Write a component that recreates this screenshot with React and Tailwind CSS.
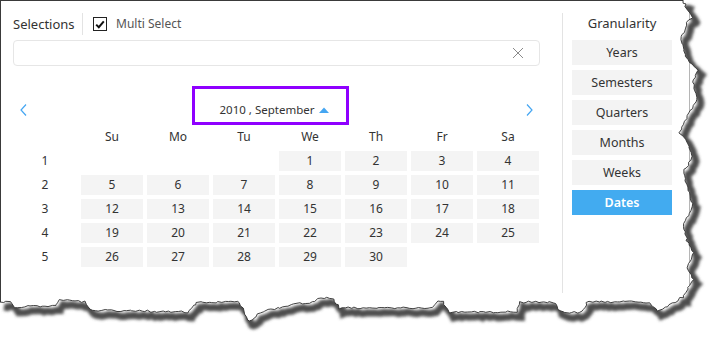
import React from "react";

const ctrl = [[683,0],[687,10],[693,17],[687,23],[680,40],[687,60],[699,70],[693,80],[697,100],[690,110],[680,133],[687,143],[693,157],[683,173],[687,187],[693,207],[683,227],[687,240],[693,253],[687,267],[693,280],[683,297],[670,305],[657,312],[650,302],[587,302],[583,312],[560,312],[553,302],[520,302],[517,312],[450,312],[443,302],[437,302],[433,308],[340,308],[333,298],[320,298],[310,303],[300,303],[260,312],[253,320],[247,320],[240,302],[197,302],[187,312],[90,310],[85,302],[60,300],[55,306],[15,307],[10,302],[0,302]];

function makeEdge() {
  let s = 12345;
  const r = () => { s = (s * 16807) % 2147483647; return (s - 1) / 2147483646; };
  const pts = [];
  for (let i = 0; i < ctrl.length - 1; i++) {
    const [x1, y1] = ctrl[i];
    const [x2, y2] = ctrl[i + 1];
    const d = Math.hypot(x2 - x1, y2 - y1);
    const n = Math.max(1, Math.round(d / 3));
    for (let j = 0; j < n; j++) {
      const t = j / n;
      const jx = i === 0 && j === 0 ? 0 : (r() - 0.5) * 2.2;
      const jy = i === 0 && j === 0 ? 0 : (r() - 0.5) * 2.2;
      pts.push([x1 + (x2 - x1) * t + jx, y1 + (y2 - y1) * t + jy]);
    }
  }
  pts.push(ctrl[ctrl.length - 1]);
  return pts;
}
const EDGE = makeEdge();
const edgeStr = EDGE.map((p) => `${p[0].toFixed(1)},${p[1].toFixed(1)}`).join(" L");
const outside = `M725,0 L${edgeStr} L0,342 L725,342 Z`;
const edgeLine = `M${edgeStr}`;

const weeks = [
  [1, [null, null, null, 1, 2, 3, 4]],
  [2, [5, 6, 7, 8, 9, 10, 11]],
  [3, [12, 13, 14, 15, 16, 17, 18]],
  [4, [19, 20, 21, 22, 23, 24, 25]],
  [5, [26, 27, 28, 29, 30, null, null]],
];
const days = ["Su", "Mo", "Tu", "We", "Th", "Fr", "Sa"];
const grans = ["Years", "Semesters", "Quarters", "Months", "Weeks", "Dates"];

export default function App() {
  return (
    <div className="relative w-[725px] h-[342px] bg-white overflow-hidden font-['Noto_Sans',sans-serif] text-[#333]">
      <div className="w-[690px] h-[312px] border-t border-l border-r border-t-[#3a3a3a] border-l-[#3a3a3a] border-r-[#b5b5b5] flex">
        {/* left */}
        <div className="pl-[12px] pt-[12px] w-[539px] shrink-0 flex flex-col">
          <div className="h-[22px] flex items-center">
            <div className="w-[59px] text-[13px] leading-none">Selections</div>
            <div className="ml-[10px] w-px h-[22px] bg-[#e3e3e3]" />
            <div className="ml-[10px] w-[14px] h-[14px] border border-[#222] flex items-center justify-center">
              <svg width="10" height="9" viewBox="0 0 10 9">
                <path d="M1.2 4.6 L3.8 7.2 L8.8 1.4" fill="none" stroke="#111" strokeWidth="2" />
              </svg>
            </div>
            <div className="ml-[9px] text-[12px] text-[#555] leading-none">Multi Select</div>
          </div>
          <div className="mt-[5px] h-[26px] w-[527px] border border-[#e6e6e6] rounded-[4px] flex items-center justify-end pr-[15px]">
            <svg width="12" height="12" viewBox="0 0 12 12">
              <path d="M1 1 L11 11 M11 1 L1 11" stroke="#8a8a8a" strokeWidth="1" fill="none" />
            </svg>
          </div>
          <div className="mt-[34px] h-[20px] w-[527px] flex items-center">
            <div className="w-[14px] flex justify-end">
              <svg width="7" height="12" viewBox="0 0 7 12">
                <path d="M6 0.5 L1 6 L6 11.5" stroke="#45a6f2" strokeWidth="1.2" fill="none" />
              </svg>
            </div>
            <div className="flex-1 flex items-center justify-center pr-[4px]">
              <span className="text-[11.5px]">2010 , September</span>
              <svg className="ml-[5px]" width="10" height="6" viewBox="0 0 10 6">
                <path d="M0 6 L5 0.5 L10 6 Z" fill="#45a6f2" />
              </svg>
            </div>
            <div className="w-[14px] flex justify-start">
              <svg width="7" height="12" viewBox="0 0 7 12">
                <path d="M1 0.5 L6 6 L1 11.5" stroke="#45a6f2" strokeWidth="1.2" fill="none" />
              </svg>
            </div>
          </div>
          <div className="mt-[7px] grid grid-cols-[64px_repeat(7,62px)] auto-rows-[20px] gap-[4px] text-[12px]">
            <div />
            {days.map((d) => (
              <div key={d} className="flex items-center justify-center">{d}</div>
            ))}
            {weeks.map(([w, ds]) => (
              <React.Fragment key={w}>
                <div className="flex items-center justify-center">{w}</div>
                {ds.map((d, i) =>
                  d === null ? (
                    <div key={i} />
                  ) : (
                    <div key={i} className="bg-[#f4f4f4] flex items-center justify-center">{d}</div>
                  )
                )}
              </React.Fragment>
            ))}
          </div>
        </div>
        {/* divider */}
        <div className="ml-[22px] mt-[12px] w-px h-[280px] shrink-0 bg-[#e3e3e3]" />
        {/* right */}
        <div className="ml-[9px] pt-[11px] w-[100px] shrink-0 flex flex-col">
          <div className="h-[22px] flex items-center justify-center text-[13px] leading-none">Granularity</div>
          <div className="mt-[6px] flex flex-col gap-[5px]">
            {grans.map((g) =>
              g === "Dates" ? (
                <div key={g} className="h-[25px] pt-[2px] bg-[#42abf0] text-white font-semibold text-[12.5px] flex items-center justify-center">{g}</div>
              ) : (
                <div key={g} className="h-[25px] pt-[2px] bg-[#f3f3f3] text-[12.5px] flex items-center justify-center">{g}</div>
              )
            )}
          </div>
        </div>
      </div>

      {/* annotation box */}
      <div className="absolute left-[192px] top-[86px] w-[157px] h-[39px] border-[3px] border-[#8f00ff]" />

      {/* torn edge */}
      <svg className="absolute left-0 top-0" width="725" height="342" viewBox="0 0 725 342">
        <defs>
          <filter id="blur" x="-10%" y="-10%" width="120%" height="120%">
            <feGaussianBlur stdDeviation="1.6" />
          </filter>
          <clipPath id="out">
            <path d={outside} />
          </clipPath>
        </defs>
        <path d={outside} fill="#ffffff" />
        <g clipPath="url(#out)">
          <path d={edgeLine} transform="translate(4,5)" fill="none" stroke="#4d4d4d" strokeWidth="7" filter="url(#blur)" />
        </g>
        <path d={edgeLine} fill="none" stroke="#2e2e2e" strokeWidth="0.9" />
      </svg>
    </div>
  );
}
